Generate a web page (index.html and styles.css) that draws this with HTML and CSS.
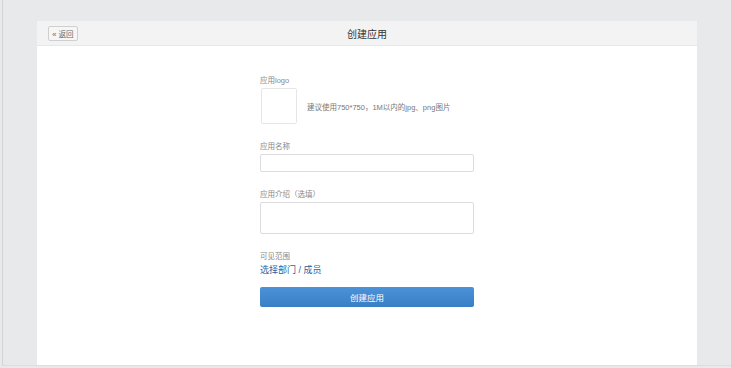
FILE: index.html
```html
<!DOCTYPE html>
<html lang="zh-CN">
<head>
    <meta charset="UTF-8">
    <meta name="viewport" content="width=device-width, initial-scale=1.0">
    <title>创建应用</title>
    <link rel="stylesheet" href="styles.css">
</head>
<body>
<div class="page">
    <div class="panel">
        <header class="panel-head">
            <button class="back-btn">&laquo; 返回</button>
            <h1>创建应用</h1>
        </header>
        <div class="form">
            <div class="label first">应用logo</div>
            <div class="logo-row">
                <div class="logo-box"></div>
                <span class="hint">建议使用750*750，1M以内的jpg、png图片</span>
            </div>
            <div class="label">应用名称</div>
            <input class="field" type="text">
            <div class="label">应用介绍（选填）</div>
            <textarea class="field area"></textarea>
            <div class="label">可见范围</div>
            <a class="pick-link" href="#">选择部门 / 成员</a>
            <button class="submit-btn">创建应用</button>
        </div>
    </div>
</div>
</body>
</html>
```

FILE: styles.css
```css
body {
    margin: 0;
    background: #e8e9eb;
    font-family: "Liberation Sans", "Noto Sans CJK SC", sans-serif;
    color: #333;
}
.page {
    margin-left: 2px;
    height: 344px;
    padding: 21px 34px 0 34px;
    border-left: 1px solid #d2d3d6;
    border-bottom: 1px solid #dcdde0;
}
.panel {
    background: white;
    height: 344px;
}
.panel-head {
    position: relative;
    height: 24px;
    background: #f3f3f3;
    border-bottom: 1px solid #e8e8e8;
    display: flex;
    align-items: center;
    justify-content: center;
}
.panel-head h1 {
    margin: 0;
    font-size: 10px;
    font-weight: normal;
    color: #333;
}
.back-btn {
    position: absolute;
    left: 11px;
    top: 5px;
    height: 15px;
    width: 30px;
    padding: 0;
    font-family: inherit;
    font-size: 7.5px;
    color: #666;
    background: #f6f6f6;
    border: 1px solid #cfcfcf;
    border-radius: 2px;
}
.form {
    width: 214px;
    margin: 0 auto;
    padding-top: 28px;
    display: flex;
    flex-direction: column;
}
.label {
    font-size: 7.5px;
    line-height: 10px;
    height: 10px;
    padding-top: 2px;
    color: #888;
    margin-top: 16px;
}
.label.first {
    margin-top: 0;
}
.logo-row {
    display: flex;
    align-items: center;
    margin-top: 2px;
}
.logo-box {
    width: 34px;
    height: 34px;
    margin-left: 1px;
    border: 1px solid #e6e6e6;
    border-radius: 2px;
}
.hint {
    font-size: 7.5px;
    color: #777;
    margin-left: 10px;
}
.field {
    display: block;
    box-sizing: border-box;
    width: 214px;
    height: 18px;
    margin: 2px 0 0;
    padding: 0;
    border: 1px solid #dcdcdc;
    border-radius: 2px;
    resize: none;
    font-family: inherit;
}
.area {
    height: 32px;
}
.pick-link {
    margin-top: 2px;
    font-size: 9px;
    line-height: 12px;
    color: #1f5fa0;
    text-decoration: none;
}
.submit-btn {
    margin-top: 11px;
    height: 20px;
    width: 214px;
    padding: 0;
    border: none;
    border-radius: 2px;
    background: linear-gradient(#4b92d8, #3a7fc6);
    color: white;
    font-family: inherit;
    font-size: 8.5px;
}
```
